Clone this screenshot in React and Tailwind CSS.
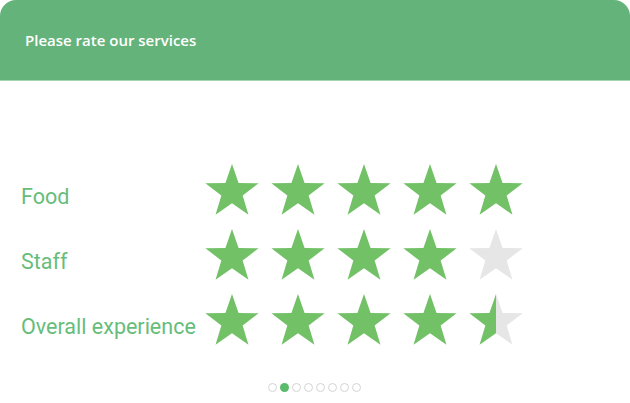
import React from 'react'

const ROWS = [
  { label: 'Food', value: 5 },
  { label: 'Staff', value: 4 },
  { label: 'Overall experience', value: 4.5 },
]

function starPoints(cx, cy, R, r) {
  const pts = []
  for (let i = 0; i < 10; i++) {
    const a = (-90 + i * 36) * (Math.PI / 180)
    const rad = i % 2 === 0 ? R : r
    pts.push(`${(cx + rad * Math.cos(a)).toFixed(2)},${(cy + rad * Math.sin(a)).toFixed(2)}`)
  }
  return pts.join(' ')
}

const POINTS = starPoints(27, 28, 28, 11.2)

function Star({ fill, id }) {
  // fill: 1 full, 0.5 half, 0 empty
  return (
    <svg width="54" height="52" viewBox="0 0 54 52" className="shrink-0">
      <defs>
        <linearGradient id={id} x1="0" x2="1" y1="0" y2="0">
          <stop offset={fill} stopColor="#72c167" />
          <stop offset={fill} stopColor="#e6e6e6" />
        </linearGradient>
      </defs>
      <polygon points={POINTS} fill={`url(#${id})`} />
    </svg>
  )
}

export default function App() {
  return (
    <div className="w-[630px] h-[403px] bg-white flex flex-col" style={{ fontFamily: 'Roboto, sans-serif' }}>
      <div className="h-[81px] bg-[#64b37a] rounded-t-[16px] border-b border-[#a5d6b2] flex items-center px-[25px]">
        <h1 className="text-white text-[15px] font-semibold" style={{ fontFamily: '"Open Sans", sans-serif' }}>
          Please rate our services
        </h1>
      </div>

      <div className="flex flex-col gap-[13px] pt-[83px]">
        {ROWS.map((row, ri) => (
          <div key={row.label} className="flex items-center h-[52px]">
            <span className="w-[205px] pl-[21px] pt-[15px] text-[21.5px] text-[#66bd7a] whitespace-nowrap">
              {row.label}
            </span>
            <div className="flex gap-[12px]">
              {[0, 1, 2, 3, 4].map((i) => (
                <Star key={i} id={`s${ri}${i}`} fill={Math.max(0, Math.min(1, row.value - i))} />
              ))}
            </div>
          </div>
        ))}
      </div>

      <div className="flex justify-center gap-[3px] mt-auto mb-[11px] pr-[1px]">
        {[0, 1, 2, 3, 4, 5, 6, 7].map((i) =>
          i === 1 ? (
            <span key={i} className="w-[9px] h-[9px] rounded-full bg-[#5cba6c]" />
          ) : (
            <span key={i} className="w-[9px] h-[9px] rounded-full border border-[#d4d4d4]" />
          )
        )}
      </div>
    </div>
  )
}
